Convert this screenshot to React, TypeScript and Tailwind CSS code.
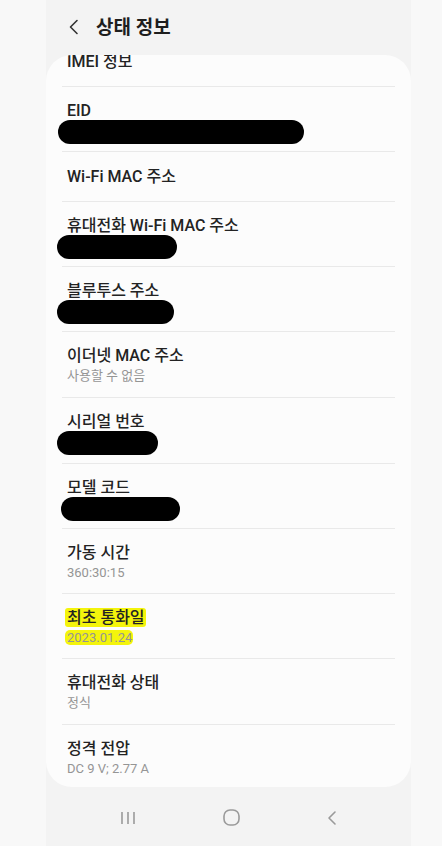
import React from "react";

type Row = {
  title: string;
  sub?: string;
  blob?: { w: number; ml: number };
  mark?: boolean;
  tall?: boolean;
};

const rows: Row[] = [
  { title: "IMEI 정보" },
  { title: "EID", blob: { w: 246, ml: -9 } },
  { title: "Wi-Fi MAC 주소" },
  { title: "휴대전화 Wi-Fi MAC 주소", blob: { w: 120, ml: -10 } },
  { title: "블루투스 주소", blob: { w: 117, ml: -10 } },
  { title: "이더넷 MAC 주소", sub: "사용할 수 없음", tall: true },
  { title: "시리얼 번호", blob: { w: 101, ml: -10 }, tall: true },
  { title: "모델 코드", blob: { w: 119, ml: -6 } },
  { title: "가동 시간", sub: "360:30:15" },
  { title: "최초 통화일", sub: "2023.01.24", mark: true },
  { title: "휴대전화 상태", sub: "정식", tall: true },
  { title: "정격 전압", sub: "DC 9 V; 2.77 A" },
];

function InfoRow({ row, last }: { row: Row; last: boolean }) {
  const twoLine = !!(row.sub || row.blob);
  const pad = !twoLine
    ? "pt-[15px] pb-[14px]"
    : row.tall
      ? "pt-[14px] pb-[11px]"
      : "pt-[14px] pb-[10px]";
  return (
    <div>
      <div className={`flex flex-col pl-[21px] ${pad}`}>
        <div className="text-[16px] leading-[20px] font-medium text-[#232323]">
          {row.mark ? <span className="bg-[#f4f40c] rounded-[3px] -ml-[2px] pl-[2px] pr-[1px]">{row.title}</span> : row.title}
        </div>
        {row.sub && (
          <div className="text-[13px] leading-[20px] text-[#959595]">
            {row.mark ? <span className="bg-[#f4f40c] rounded-[5px] -ml-[2px] pl-[2px] pr-[1px]">{row.sub}</span> : row.sub}
          </div>
        )}
        {row.blob && (
          <div className="h-[20px]">
            <div
              className="h-[24px] -mt-[1px] rounded-full bg-black"
              style={{ width: row.blob.w, marginLeft: row.blob.ml }}
            />
          </div>
        )}
      </div>
      {!last && <div className="mx-[16px] h-px bg-[#e9e9e9]" />}
    </div>
  );
}

export default function App() {
  return (
    <div className="flex w-[442px] h-[846px] bg-[#f8f8f8] font-[family-name:Roboto,'Noto_Sans_CJK_KR',sans-serif] overflow-hidden">
      <div className="ml-[46px] w-[365px] bg-[#f3f3f3] flex flex-col">
        {/* Header */}
        <div className="h-[55px] flex items-center shrink-0">
          <svg width="12" height="16" viewBox="0 0 12 16" className="ml-[22px] mt-[-1px]">
            <path d="M9 1.5 L2.5 8 L9 14.5" fill="none" stroke="#333" strokeWidth="1.6" strokeLinecap="round" strokeLinejoin="round" />
          </svg>
          <span className="ml-[16px] text-[19px] font-bold text-[#1e1e1e] leading-none">상태 정보</span>
        </div>

        {/* Card */}
        <div className="h-[732px] shrink-0 rounded-[26px] bg-[#fcfcfc] overflow-hidden">
          <div className="-mt-[18px]">
            {rows.map((r, i) => (
              <InfoRow key={r.title} row={r} last={i === rows.length - 1} />
            ))}
          </div>
        </div>

        {/* Nav bar */}
        <div className="flex-1 flex items-center justify-around px-[30px] pt-[2px]">
          <svg width="16" height="14" viewBox="0 0 16 14">
            <path d="M2 1 V13 M8 1 V13 M14 1 V13" stroke="#9a9a9a" strokeWidth="1.6" />
          </svg>
          <svg width="17" height="17" viewBox="0 0 17 17">
            <rect x="1" y="1" width="15" height="15" rx="6" fill="none" stroke="#9a9a9a" strokeWidth="1.6" />
          </svg>
          <svg width="10" height="16" viewBox="0 0 10 16">
            <path d="M8 2 L2 8 L8 14" fill="none" stroke="#9a9a9a" strokeWidth="1.6" strokeLinecap="round" strokeLinejoin="round" />
          </svg>
        </div>
      </div>
    </div>
  );
}
